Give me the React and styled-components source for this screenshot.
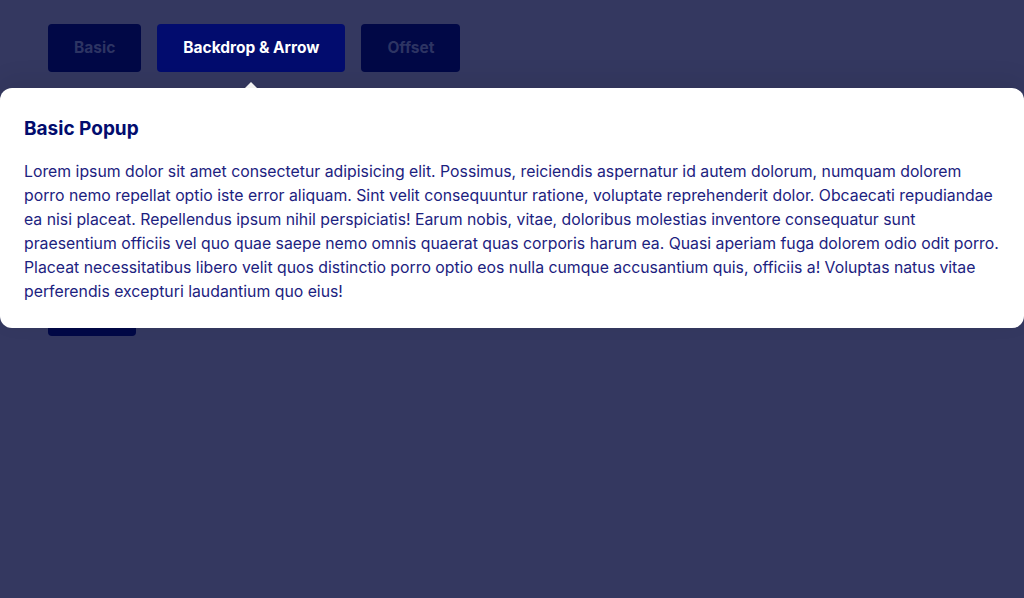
import React from "react";
import styled, { createGlobalStyle } from "styled-components";

const Global = createGlobalStyle`
  html, body { margin: 0; padding: 0; }
  body {
    background: #343860;
    font-family: Inter, "Noto Sans", sans-serif;
    width: 1024px;
    height: 598px;
    overflow: hidden;
  }
`;

const Page = styled.div`
  position: relative;
  height: 598px;
  padding: 24px 48px;
  box-sizing: border-box;
  display: flex;
  flex-direction: column;
  gap: 216px;
`;

const TabRow = styled.div`
  display: flex;
  gap: 16px;
`;

const Tab = styled.button`
  position: relative;
  height: 48px;
  padding: 0 26px 1px;
  border: none;
  border-radius: 4px;
  font-family: Inter, sans-serif;
  font-weight: 700;
  font-size: 15.5px;
  background: ${(p) => (p.$active ? "#020c6e" : "#010846")};
  color: ${(p) => (p.$active ? "#ffffff" : "#2d3463")};
  cursor: pointer;
`;

const Arrow = styled.span`
  position: absolute;
  left: 50%;
  top: 58px;
  margin-left: -7px;
  width: 0;
  height: 0;
  border-left: 7px solid transparent;
  border-right: 7px solid transparent;
  border-bottom: 7px solid #ffffff;
`;

const Trigger = styled.button`
  width: 88px;
  height: 48px;
  border: none;
  border-radius: 4px;
  background: #010846;
`;

const Popup = styled.div`
  position: absolute;
  top: 88px;
  left: 0;
  width: 1024px;
  height: 240px;
  box-sizing: border-box;
  padding: 24px;
  background: #ffffff;
  border-radius: 12px;
  box-shadow: 0 -8px 24px rgba(0, 0, 0, 0.08);
  color: #020c6e;
`;

const Title = styled.h2`
  margin: 3px 0 0;
  font-family: Inter, sans-serif;
  font-size: 19px;
  font-weight: 700;
  line-height: 28px;
  color: #020c6e;
`;

const Body = styled.p`
  margin: 17px 0 0;
  font-size: 15.8px;
  line-height: 24px;
  color: #1c2280;
`;

export default function App() {
  return (
    <>
      <Global />
      <Page>
        <TabRow>
          <Tab>Basic</Tab>
          <Tab $active>
            Backdrop &amp; Arrow
            <Arrow />
          </Tab>
          <Tab>Offset</Tab>
        </TabRow>
        <div>
          <Trigger />
        </div>
      </Page>
      <Popup>
        <Title>Basic Popup</Title>
        <Body>
          Lorem ipsum dolor sit amet consectetur adipisicing elit. Possimus, reiciendis aspernatur id autem dolorum, numquam dolorem porro nemo repellat optio iste error aliquam. Sint velit consequuntur ratione, voluptate reprehenderit dolor. Obcaecati repudiandae ea nisi placeat. Repellendus ipsum nihil perspiciatis! Earum nobis, vitae, doloribus molestias inventore consequatur sunt praesentium officiis vel quo quae saepe nemo omnis quaerat quas corporis harum ea. Quasi aperiam fuga dolorem odio odit porro. Placeat necessitatibus libero velit quos distinctio porro optio eos nulla cumque accusantium quis, officiis a! Voluptas natus vitae perferendis excepturi laudantium quo eius!
        </Body>
      </Popup>
    </>
  );
}
